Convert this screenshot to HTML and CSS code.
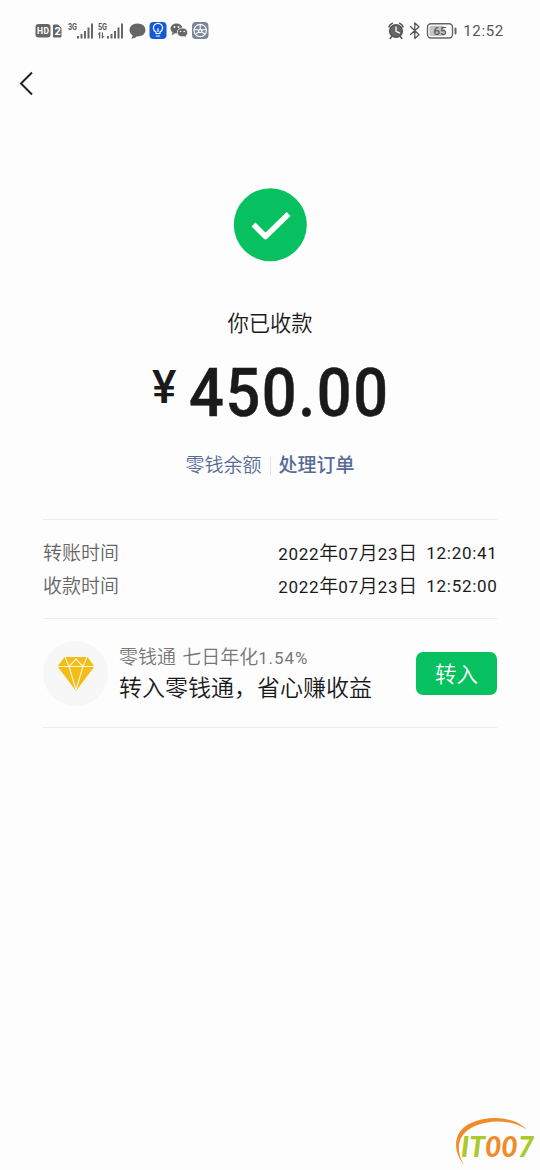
FILE: index.html
```html
<!DOCTYPE html>
<html lang="zh-CN">
<head>
<meta charset="utf-8">
<title>收款</title>
<link rel="stylesheet" href="styles.css">
</head>
<body>
<div class="screen">
  <header class="status">
    <svg class="status-left" width="180" height="26" viewBox="0 0 180 26">
      <rect x="0.500" y="6" width="15" height="13.500" rx="3" fill="#666"/>
      <text x="2" y="16" class="badge" textLength="12">HD</text>
      <path d="M18.500 7h4.500l3 3v9h-7.500z" fill="#666" stroke="#666" stroke-linejoin="round"/>
      <text x="19.500" y="17" class="badge big">2</text>
      <text x="33" y="12" class="net" textLength="9" lengthAdjust="spacingAndGlyphs">3G</text>
      <g fill="#666">
        <path d="M42 18h2v2.500h-2zM45.500 16h2v4.500h-2zM49 13h2v7.500h-2zM52.500 9.500h2v11h-2zM56 5.500h2v15h-2z"/>
        <path d="M72 18h2v2.500h-2zM75.500 16h2v4.500h-2zM79 13h2v7.500h-2zM82.500 9.500h2v11h-2zM86 5.500h2v15h-2z"/>
        <path d="M64 20.500v-4h-1.500l2-2.500h.8v6.500zM66.800 14.500h1.200v3.500h1.500l-2 2.500h-.7z"/>
        <path d="M102.500 5.500c4.500 0 8 2.800 8 6.500s-3.500 6.500-8 6.500l-1 0c-1.500 1.700-3.200 2-5.200 1.900.9-.9 1.300-1.900 1.200-3.100-1.900-1.200-3-3.100-3-5.300 0-3.700 3.500-6.500 8-6.500z"/>
      </g>
      <text x="63" y="12" class="net" textLength="9" lengthAdjust="spacingAndGlyphs">5G</text>
      <rect x="114.500" y="4" width="17" height="17" rx="4" fill="#1559d6"/>
      <g fill="none" stroke="#fff" stroke-width="1.200" stroke-linecap="round">
        <path d="M121 15.500v-1.500c-1.600-1-2.600-2.300-2.600-4.100a4.600 4.600 0 0 1 9.200 0c0 1.800-1 3.100-2.600 4.100v1.500z"/>
        <path d="M121.300 18h3.400M123 13.500v-3"/>
      </g>
      <ellipse cx="141.500" cy="10.500" rx="6" ry="5" fill="#666"/>
      <path d="M137.500 14l-.8 3.200 3.500-2z" fill="#666"/>
      <path d="M147.500 10c3.300 0 5.200 2 5.200 4.500 0 1.400-.7 2.500-1.800 3.300l.4 1.900-2.100-1.100c-4.100.8-6.900-1.200-6.900-4.100 0-2.600 2-4.500 5.200-4.500z" fill="#666" stroke="#fff" stroke-width=".8"/>
      <g fill="#fff"><circle cx="139.500" cy="9" r=".9"/><circle cx="143.500" cy="9" r=".9"/><circle cx="145.600" cy="13.500" r=".8"/><circle cx="149.200" cy="13.500" r=".8"/></g>
      <rect x="157" y="4" width="16.500" height="17" rx="4" fill="#79859b"/>
      <g fill="none" stroke="#fff" stroke-width="1.200">
        <circle cx="165.200" cy="12.500" r="6.200"/>
        <circle cx="165.200" cy="13" r="1.600"/>
        <path d="M165.200 11.500V6.500M163.800 14l-3.500 2.200M166.600 14l3.500 2.200M159.500 11.500c2 0 3.200 0 4.200.7M171 11.500c-2 0-3.200 0-4.200.7"/>
      </g>
    </svg>
    <div class="status-right">
      <svg width="70" height="26" viewBox="0 0 70 26">
        <g fill="none" stroke="#555" stroke-width="1.500" stroke-linecap="round">
          <circle cx="9" cy="13" r="6.300" fill="#666"/>
          <path d="M2 9c.4-2 1.600-3.200 3.400-3.800M16 9c-.4-2-1.600-3.200-3.400-3.800M4.700 18.500l-1.500 2M13.300 18.500l1.500 2"/>
          <path d="M9 9v4.300l3.500 1.500" stroke="#fff" stroke-width="1.300"/>
          <path d="M23.500 8.500l8.500 8.200-4.200 3.800V5L32 8.800 23.500 16.500" stroke-width="1.300" stroke-linejoin="round"/>
        </g>
        <rect x="40.500" y="5.700" width="25" height="14.300" rx="3.500" fill="none" stroke="#666" stroke-width="1.400"/>
        <rect x="42.500" y="7.700" width="15" height="10.300" rx="1.500" fill="#c4c4c4"/>
        <rect x="67.500" y="9.500" width="2" height="7" rx="1" fill="#666"/>
        <text x="46.500" y="16.800" class="battery" textLength="13">65</text>
      </svg>
      <span class="clock">12:52</span>
    </div>
  </header>
  <nav class="nav">
    <svg width="16" height="26" viewBox="0 0 16 26"><path d="M14 2.500L3 13.500l11 11" fill="none" stroke="#222" stroke-width="2"/></svg>
  </nav>
  <main class="content">
    <svg class="success" width="74" height="74" viewBox="0 0 74 74">
      <circle cx="37.300" cy="36.700" r="36.500" fill="#07c160"/>
      <path d="M20.500 36.500L32.500 48.500 55.500 26" fill="none" stroke="#fff" stroke-width="5.500" stroke-linejoin="round"/>
    </svg>
    <h1 class="title">你已收款</h1>
    <div class="amount"><span class="yen">¥</span><span class="value">450.00</span></div>
    <div class="links"><a>零钱余额</a><i class="bar"></i><a class="strong">处理订单</a></div>
    <dl class="details">
      <div class="row"><dt>转账时间</dt><dd><span class="date"><b>2022</b>年<b>07</b>月<b>23</b>日</span><span class="time">12:20:41</span></dd></div>
      <div class="row"><dt>收款时间</dt><dd><span class="date"><b>2022</b>年<b>07</b>月<b>23</b>日</span><span class="time">12:52:00</span></dd></div>
    </dl>
    <section class="promo">
      <span class="gem">
        <svg width="38" height="34" viewBox="0 0 38 34">
          <path d="M7.500 0h23L37.500 9.500 19 34 .5 9.500z" fill="#f2bd16"/>
          <path d="M0 9.500h38M8 0L12 9.500 19 33M30 0L26 9.500 19 33M12 9.500L19 2l7 7.500" fill="none" stroke="#fbf5df" stroke-width="1.100"/>
        </svg>
      </span>
      <div class="promo-text">
        <p class="rate">零钱通 七日年化<span class="pct">1.54%</span></p>
        <p class="slogan">转入零钱通，省心赚收益</p>
      </div>
      <button class="transfer">转入</button>
    </section>
  </main>
  <footer class="mark">
    <svg width="86" height="56" viewBox="0 0 86 56">
      <path d="M10 51C-2 36-1 17 17 9 37 0 62 4 72 15 58 6 37 5 21 12 3 20 1 35 10 51z" fill="#f28a2a"/>
      <text x="7" y="43" class="logo" textLength="73" lengthAdjust="spacingAndGlyphs"><tspan fill="#a9c92c">IT</tspan><tspan fill="#f28a2a">00</tspan><tspan fill="#a9c92c">7</tspan></text>
    </svg>
  </footer>
</div>
</body>
</html>
```
FILE: styles.css
```css
* { box-sizing: border-box; margin: 0; padding: 0; }
body { background: #fdfdfd; font-family: Roboto, "Noto Sans CJK SC", sans-serif; color: #1a1a1a; font-weight: 350; }
.screen { width: 540px; height: 1170px; display: flex; flex-direction: column; }
.status { height: 60px; padding: 18px 36px 0 35px; display: flex; justify-content: space-between; align-items: flex-start; }
.status svg { display: block; }
.status-right { display: flex; }
.badge { font: 700 8.500px Roboto, sans-serif; fill: #fff; }
.big { font-size: 11px; }
.net { font: 700 8.500px Roboto, sans-serif; fill: #555; }
.battery { font: 500 11.500px Roboto, sans-serif; fill: #555; }
.clock { width: 47px; font-size: 15px; line-height: 27px; letter-spacing: .7px; color: #555; font-weight: 400; text-align: right; white-space: nowrap; }
.nav { height: 46px; padding: 10px 0 0 18px; }
.nav svg { display: block; }
.content { flex: 1; padding: 82px 43px 0; display: flex; flex-direction: column; align-items: center; }
.success { display: block; flex: none; }
.title { margin-top: 46px; font-size: 21.300px; line-height: 32px; font-weight: 350; }
.amount { width: 236px; margin-top: 8px; height: 91px; display: flex; align-items: flex-start; font-weight: 500; }
.yen { width: 26px; font-size: 46px; line-height: 80px; margin: -1px 12.500px 0 0; }
.value { font-size: 66px; line-height: 92px; letter-spacing: 1.700px; transform: scaleX(.928); transform-origin: left; -webkit-text-stroke: .5px #1a1a1a; }
.links { height: 30px; margin-top: 12px; display: flex; align-items: center; font-size: 19px; line-height: 30px; color: #576b95; }
.bar { width: 1px; height: 18px; margin: 0 8px; background: #e2e2e2; }
.strong { font-weight: 500; }
.details { width: 100%; margin-top: 38px; padding: 17px 0 15px; height: 99px; border-top: 1px solid #ececec; font-size: 19px; }
.row { height: 33px; display: flex; justify-content: space-between; align-items: center; line-height: 33px; }
dt { color: #666; }
dd { display: flex; }
b, .time { font-size: 17px; font-weight: 400; letter-spacing: .7px; }
.time { margin: 0 -.5px 0 9px; }
.promo { width: 100%; height: 110px; border-top: 1px solid #ececec; border-bottom: 1px solid #ececec; display: flex; align-items: center; }
.gem { width: 65px; height: 65px; border-radius: 50%; background: #f7f7f7; display: flex; align-items: center; justify-content: center; margin-right: 11px; padding-top: 2px; }
.gem svg { flex: none; }
.promo-text { flex: 1; white-space: nowrap; padding-top: 2px; }
.rate { font-size: 19px; line-height: 30px; color: #777; word-spacing: 1.500px; }
.pct { font-size: 17px; font-weight: 400; letter-spacing: .9px; }
.slogan { font-size: 23px; line-height: 32px; }
.transfer { width: 81px; height: 43px; padding-bottom: 2px; border: 0; border-radius: 7px; background: #07c160; color: #fff; font: 350 21.500px "Noto Sans CJK SC", sans-serif; }
.mark { height: 56px; display: flex; justify-content: flex-end; }
.logo { font: italic 900 28px Lato, sans-serif; }
```
